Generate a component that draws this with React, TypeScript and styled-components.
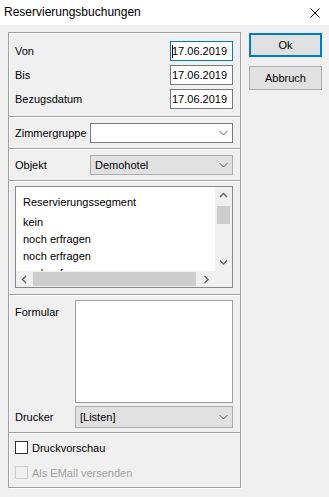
import React from 'react';
import styled, { createGlobalStyle, css } from 'styled-components';

const GlobalStyle = createGlobalStyle`
  html, body {
    margin: 0;
    padding: 0;
    background: #f0f0f0;
  }
  body {
    font-family: 'Liberation Sans', Arial, sans-serif;
    font-size: 11px;
    color: #000;
  }
`;

const Window = styled.div`
  width: 329px;
  height: 497px;
  background: #f0f0f0;
  overflow: hidden;
`;

const TitleBar = styled.div`
  height: 25px;
  background: #fff;
  display: flex;
  align-items: center;
  justify-content: space-between;
  padding: 0 9px 0 4px;
  box-sizing: border-box;
`;

const Title = styled.span`
  font-family: 'Liberation Sans', Arial, sans-serif;
  font-size: 12px;
  margin-top: -1px;
`;

const Body = styled.div`
  display: flex;
  align-items: flex-start;
  padding: 7px 0 0 8px;
  gap: 8px;
`;

const Frame = styled.div`
  width: 233px;
  height: 456px;
  box-sizing: border-box;
  border: 1px solid #a0a0a0;
  box-shadow: 1px 1px 0 #fff, inset 1px 1px 0 #fff;
  display: flex;
  flex-direction: column;
`;

const Section = styled.div<{ $pad: string; $grow?: boolean }>`
  padding: ${(p) => p.$pad};
  display: flex;
  flex-direction: column;
  & + & {
    border-top: 1px solid #a0a0a0;
    box-shadow: inset 0 1px 0 #fff;
  }
  ${(p) => p.$grow && css`flex: 1;`}
`;

const FieldRow = styled.div<{ $top?: boolean }>`
  display: flex;
  align-items: ${(p) => (p.$top ? 'flex-start' : 'center')};
  & + & {
    margin-top: 4px;
  }
`;

const Label = styled.span<{ $w?: number; $offset?: number }>`
  width: ${(p) => p.$w ?? 75}px;
  flex: none;
  margin-top: ${(p) => p.$offset ?? 0}px;
`;

const DateInput = styled.div<{ $focused?: boolean }>`
  margin-left: auto;
  width: 63px;
  height: 20px;
  box-sizing: border-box;
  border: 1px solid ${(p) => (p.$focused ? '#0078d7' : '#7a7a7a')};
  background: #fff;
  display: flex;
  align-items: center;
  padding-left: 1px;
  font-size: 11px;
`;

const Caret = styled.span`
  display: inline-block;
  width: 1px;
  height: 13px;
  background: #000;
  margin-right: -1px;
`;

const Combo = styled.div<{ $readonly?: boolean; $h?: number }>`
  flex: 1;
  height: ${(p) => p.$h ?? 20}px;
  box-sizing: border-box;
  border: 1px solid ${(p) => (p.$readonly ? '#adadad' : '#7a7a7a')};
  background: ${(p) => (p.$readonly ? '#e1e1e1' : '#fff')};
  display: flex;
  align-items: center;
  padding: 0 0 0 4px;
`;

const ComboText = styled.span`
  flex: 1;
`;

const ComboArrow = styled.span`
  width: 17px;
  display: flex;
  justify-content: center;
  align-items: center;
`;

const ListBox = styled.div`
  height: 102px;
  box-sizing: border-box;
  border: 1px solid #828790;
  background: #fff;
  display: grid;
  grid-template-columns: 1fr 17px;
  grid-template-rows: 1fr 16px;
`;

const ListContent = styled.div`
  overflow: hidden;
  padding-left: 7px;
`;

const ListHeader = styled.div`
  line-height: 13px;
  padding: 9px 0 5px;
`;

const ListItem = styled.div`
  line-height: 17px;
  white-space: nowrap;
`;

const VScroll = styled.div`
  background: #f0f0f0;
  display: flex;
  flex-direction: column;
`;

const HScroll = styled.div`
  background: #f0f0f0;
  display: flex;
`;

const Corner = styled.div`
  background: #f0f0f0;
`;

const ArrowBox = styled.div`
  width: 17px;
  height: 17px;
  flex: none;
  display: flex;
  align-items: center;
  justify-content: center;
`;

const HArrowBox = styled(ArrowBox)`
  height: 16px;
`;

const VThumb = styled.div`
  margin: 2px 2px 0;
  height: 18px;
  background: #cdcdcd;
`;

const HThumb = styled.div`
  margin: 1px 0 1px 0;
  width: 163px;
  background: #cdcdcd;
`;

const Spacer = styled.div`
  flex: 1;
`;

const FormBox = styled.div`
  flex: 1;
  height: 103px;
  box-sizing: border-box;
  border: 1px solid #a0a0a0;
  background: #fff;
`;

const CheckRow = styled.label<{ $disabled?: boolean }>`
  display: flex;
  align-items: center;
  height: 13px;
  color: ${(p) => (p.$disabled ? '#a0a0a0' : '#000')};
  & + & {
    margin-top: 12px;
  }
`;

const CheckBox = styled.span<{ $disabled?: boolean }>`
  width: 13px;
  height: 13px;
  box-sizing: border-box;
  border: 1px solid ${(p) => (p.$disabled ? '#cccccc' : '#333333')};
  background: ${(p) => (p.$disabled ? '#f0f0f0' : '#fff')};
  margin-right: 4px;
  flex: none;
`;

const ButtonColumn = styled.div`
  display: flex;
  flex-direction: column;
  gap: 9px;
  padding-top: 1px;
`;

const Button = styled.div<{ $default?: boolean }>`
  width: 73px;
  height: 24px;
  box-sizing: border-box;
  background: #e1e1e1;
  border: ${(p) => (p.$default ? '2px solid #0078d7' : '1px solid #adadad')};
  display: flex;
  align-items: center;
  justify-content: center;
`;

type Dir = 'up' | 'down' | 'left' | 'right';

const Chevron = ({ dir, color = '#606060' }: { dir: Dir; color?: string }) => {
  const paths: Record<Dir, string> = {
    up: 'M1 5 L4.5 1.5 L8 5',
    down: 'M1 1.5 L4.5 5 L8 1.5',
    left: 'M5 1 L1.5 4.5 L5 8',
    right: 'M1.5 1 L5 4.5 L1.5 8',
  };
  const horiz = dir === 'left' || dir === 'right';
  return (
    <svg width={horiz ? 7 : 9} height={horiz ? 9 : 7} viewBox={horiz ? '0 0 7 9' : '0 0 9 7'}>
      <path d={paths[dir]} fill="none" stroke={color} strokeWidth={1.4} />
    </svg>
  );
};

const ComboChevron = () => (
  <svg width="9" height="6" viewBox="0 0 9 6">
    <path d="M0.5 1 L4.5 5 L8.5 1" fill="none" stroke="#5a5a5a" strokeWidth={1} />
  </svg>
);

const CloseIcon = () => (
  <svg width="10" height="10" viewBox="0 0 10 10">
    <path d="M0.5 0.5 L9.5 9.5 M9.5 0.5 L0.5 9.5" stroke="#000" strokeWidth={1} />
  </svg>
);

const dates = [
  { label: 'Von', value: '17.06.2019', focused: true },
  { label: 'Bis', value: '17.06.2019' },
  { label: 'Bezugsdatum', value: '17.06.2019' },
];

const items = ['kein', 'noch erfragen', 'noch erfragen', 'noch erfragen'];

function App() {
  return (
    <>
      <GlobalStyle />
      <Window>
        <TitleBar>
          <Title>Reservierungsbuchungen</Title>
          <CloseIcon />
        </TitleBar>
        <Body>
          <Frame>
            <Section $pad="8px 7px 7px 6px">
              {dates.map((d) => (
                <FieldRow key={d.label}>
                  <Label>{d.label}</Label>
                  <DateInput $focused={d.focused}>
                    {d.focused && <Caret />}
                    {d.value}
                  </DateInput>
                </FieldRow>
              ))}
            </Section>
            <Section $pad="6px 7px 5px 6px">
              <FieldRow>
                <Label>Zimmergruppe</Label>
                <Combo>
                  <ComboText />
                  <ComboArrow><ComboChevron /></ComboArrow>
                </Combo>
              </FieldRow>
            </Section>
            <Section $pad="6px 7px 5px 6px">
              <FieldRow>
                <Label>Objekt</Label>
                <Combo $readonly>
                  <ComboText>Demohotel</ComboText>
                  <ComboArrow><ComboChevron /></ComboArrow>
                </Combo>
              </FieldRow>
            </Section>
            <Section $pad="5px 7px 6px 6px">
              <ListBox>
                <ListContent>
                  <ListHeader>Reservierungssegment</ListHeader>
                  {items.map((it, i) => (
                    <ListItem key={i}>{it}</ListItem>
                  ))}
                </ListContent>
                <VScroll>
                  <ArrowBox><Chevron dir="up" /></ArrowBox>
                  <VThumb />
                  <Spacer />
                  <ArrowBox><Chevron dir="down" /></ArrowBox>
                </VScroll>
                <HScroll>
                  <HArrowBox><Chevron dir="left" /></HArrowBox>
                  <HThumb />
                  <Spacer />
                  <HArrowBox><Chevron dir="right" /></HArrowBox>
                </HScroll>
                <Corner />
              </ListBox>
            </Section>
            <Section $pad="5px 7px 4px 6px">
              <FieldRow $top>
                <Label $w={60} $offset={6}>Formular</Label>
                <FormBox />
              </FieldRow>
              <FieldRow style={{ marginTop: 3 }}>
                <Label $w={60}>Drucker</Label>
                <Combo $readonly $h={22}>
                  <ComboText>[Listen]</ComboText>
                  <ComboArrow><ComboChevron /></ComboArrow>
                </Combo>
              </FieldRow>
            </Section>
            <Section $pad="8px 7px 8px 6px" $grow>
              <CheckRow>
                <CheckBox />
                Druckvorschau
              </CheckRow>
              <CheckRow $disabled>
                <CheckBox $disabled />
                Als EMail versenden
              </CheckRow>
            </Section>
          </Frame>
          <ButtonColumn>
            <Button $default>Ok</Button>
            <Button>Abbruch</Button>
          </ButtonColumn>
        </Body>
      </Window>
    </>
  );
}

export default App;
